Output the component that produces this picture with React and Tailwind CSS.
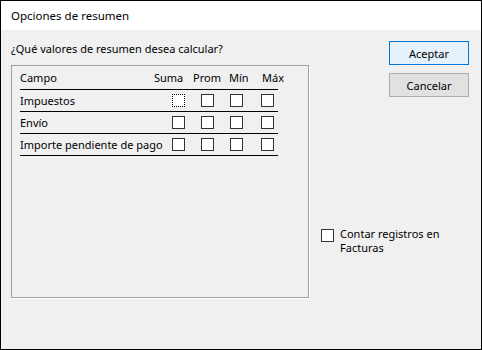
const rows = ['Impuestos', 'Envío', 'Importe pendiente de pago']

function Box({ focused = false }) {
  return (
    <div
      className={`w-[13px] h-[13px] shrink-0 bg-white border ${
        focused ? 'border-dotted border-black' : 'border-[#333333]'
      }`}
    />
  )
}

export default function App() {
  return (
    <div
      className="w-[482px] h-[350px] border border-black bg-[#f0f0f0] flex flex-col text-[11px] text-black leading-[15px]"
      style={{ fontFamily: '"Segoe UI", "Noto Sans", "Open Sans", sans-serif' }}
    >
      <div className="h-[29px] bg-white flex items-center pl-[10px] shrink-0 text-[11.5px]">Opciones de resumen</div>

      <div className="flex flex-1">
        {/* left side */}
        <div className="ml-[10px] w-[298px] flex flex-col">
          <div className="mt-[11px] h-[15px]">¿Qué valores de resumen desea calcular?</div>
          <div className="mt-[9px] h-[233px] border border-[#a0a0a0] shadow-[1px_1px_0_#ffffff] px-[8px]">
            <div className="w-[258px]">
              <div className="h-[24px] flex items-center border-b border-black">
                <span className="w-[134px] shrink-0">Campo</span>
                <span className="w-[39px] shrink-0">Suma</span>
                <span className="w-[36px] shrink-0">Prom</span>
                <span className="w-[33px] shrink-0">Mín</span>
                <span className="w-[16px] shrink-0 whitespace-nowrap">Máx</span>
              </div>
              {rows.map((r, i) => (
                <div key={r} className="h-[22px] flex items-center border-b border-black">
                  <span className="w-[152px] shrink-0 whitespace-nowrap">{r}</span>
                  <Box focused={i === 0} />
                  <div className="ml-[16px]"><Box /></div>
                  <div className="ml-[16px]"><Box /></div>
                  <div className="ml-[18px]"><Box /></div>
                </div>
              ))}
            </div>
          </div>
        </div>

        {/* right side */}
        <div className="flex-1 flex flex-col">
          <div className="flex flex-col items-end pr-[12px] pt-[11px] gap-[8px]">
            <button className="w-[80px] h-[24px] border border-[#0078d7] bg-[#e5f1fb] flex items-center justify-center">
              Aceptar
            </button>
            <button className="w-[80px] h-[24px] border border-[#adadad] bg-[#e1e1e1] flex items-center justify-center">
              Cancelar
            </button>
          </div>
          <div className="mt-[132px] ml-[12px] flex items-start gap-[6px]">
            <Box />
            <div className="-mt-[2px] flex flex-col leading-[14px]">
              <span>Contar registros en</span>
              <span>Facturas</span>
            </div>
          </div>
        </div>
      </div>
    </div>
  )
}
